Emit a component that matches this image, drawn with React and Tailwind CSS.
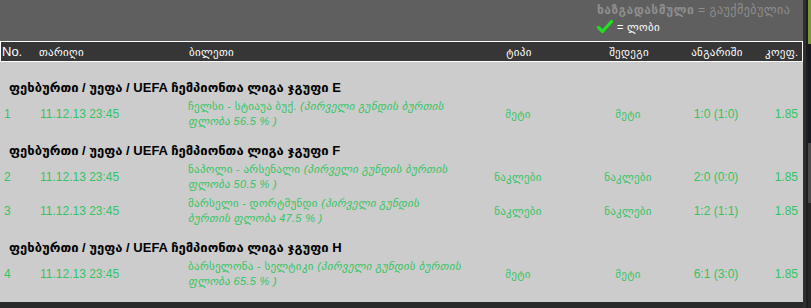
import React from "react";

const F = { fontFamily: '"Liberation Sans", "DejaVu Sans", Arial, sans-serif' };

const groups = [
  {
    title: "ფეხბურთი / უეფა / UEFA ჩემპიონთა ლიგა ჯგუფი E",
    rows: [
      { n: "1", teams: "ჩელსი - სტიაუა ბუქ.", p1: "(პირველი გუნდის ბურთის", p2: "ფლობა 56.5 % )", type: "მეტი", res: "მეტი", score: "1:0 (1:0)" },
    ],
  },
  {
    title: "ფეხბურთი / უეფა / UEFA ჩემპიონთა ლიგა ჯგუფი F",
    rows: [
      { n: "2", teams: "ნაპოლი - არსენალი", p1: "(პირველი გუნდის ბურთის", p2: "ფლობა 50.5 % )", type: "ნაკლები", res: "ნაკლები", score: "2:0 (0:0)" },
      { n: "3", teams: "მარსელი - დორტმუნდი", p1: "(პირველი გუნდის", p2: "ბურთის ფლობა 47.5 % )", type: "ნაკლები", res: "ნაკლები", score: "1:2 (1:1)" },
    ],
  },
  {
    title: "ფეხბურთი / უეფა / UEFA ჩემპიონთა ლიგა ჯგუფი H",
    rows: [
      { n: "4", teams: "ბარსელონა - სელტიკი", p1: "(პირველი გუნდის ბურთის", p2: "ფლობა 65.5 % )", type: "მეტი", res: "მეტი", score: "6:1 (3:0)" },
    ],
  },
];

const cols = "grid grid-cols-[38px_150px_282px_96px_124px_52px_61px]";

function Check() {
  return (
    <svg width="16" height="14" viewBox="0 0 16 14">
      <path d="M1.5 7.5 L5.5 11.5 L14.5 1.5" fill="none" stroke="#1fe01f" strokeWidth="3.2" strokeLinecap="round" strokeLinejoin="round" />
    </svg>
  );
}

export default function App() {
  return (
    <div className="w-[811px] h-[308px] bg-[#2b2b2b] flex overflow-hidden" style={F}>
      <div className="w-[803px] flex flex-col">
        <div className="h-[41px] bg-[#5f5f5f] flex flex-col pl-[597px] pt-[2px]">
          <div className="h-[16px] leading-[16px] text-[12px] tracking-[0.5px] text-[#8e8e8e] whitespace-nowrap">
            <span className="font-bold">ხაზგადასმული</span> = გაუქმებულია
          </div>
          <div className="flex items-center gap-[4px] h-[16px] mt-[1px]">
            <Check />
            <span className="text-[11px] tracking-[0.3px] text-white leading-[16px]">= ლობი</span>
          </div>
        </div>
        <div className={`${cols} h-[21px] bg-[#363636] border border-white items-center text-white text-[11px] tracking-[0.3px]`}>
          <div className="pl-[1px] text-[13px] tracking-normal">No.</div>
          <div>თარიღი</div>
          <div>ბილეთი</div>
          <div className="text-center">ტიპი</div>
          <div className="text-center">შედეგი</div>
          <div className="text-center whitespace-nowrap">ანგარიში</div>
          <div className="pl-[22px] whitespace-nowrap">კოეფ.</div>
        </div>
        <div className="flex-1 bg-[#cccccc] pt-[17px] flex flex-col">
          {groups.map((g, gi) => (
            <div key={gi} className={gi > 0 ? "mt-[11px]" : ""}>
              <div className="h-[18px] leading-[18px] pl-[9px] text-[13px] font-bold text-black whitespace-nowrap">{g.title}</div>
              {g.rows.map((r) => (
                <div key={r.n} className={`${cols} h-[34px] items-center text-[#33c464] text-[11px]`}>
                  <div className="pl-[4px] text-[12px]">{r.n}</div>
                  <div className="pl-[2px] text-[12px]">11.12.13 23:45</div>
                  <div className="leading-[15px] tracking-[0.3px] whitespace-nowrap">
                    <div>
                      {r.teams} <span className="italic">{r.p1}</span>
                    </div>
                    <div className="italic">{r.p2}</div>
                  </div>
                  <div className="text-center pt-[1px] tracking-[0.3px]">{r.type}</div>
                  <div className="text-center pt-[1px] tracking-[0.3px]">{r.res}</div>
                  <div className="text-center text-[12px] whitespace-nowrap">{r.score}</div>
                  <div className="text-right pr-[5px] text-[12px]">1.85</div>
                </div>
              ))}
            </div>
          ))}
        </div>
        <div className="h-[6px] bg-[#2a2a2a]" />
      </div>
      <div className="w-[8px] flex">
        <div className="w-[3px] bg-[#2f2f2f]" />
        <div className="w-[2px] bg-[#1e1e1e]" />
        <div className="w-[3px] flex flex-col">
          <div className="h-[44px] bg-[#76973a]" />
          <div className="h-[4px] bg-[#1a1a1a]" />
          <div className="h-[95px] bg-[#151a22]" />
          <div className="h-[60px] bg-[#4a4a4a]" />
          <div className="flex-1 bg-[#262626]" />
        </div>
      </div>
    </div>
  );
}
